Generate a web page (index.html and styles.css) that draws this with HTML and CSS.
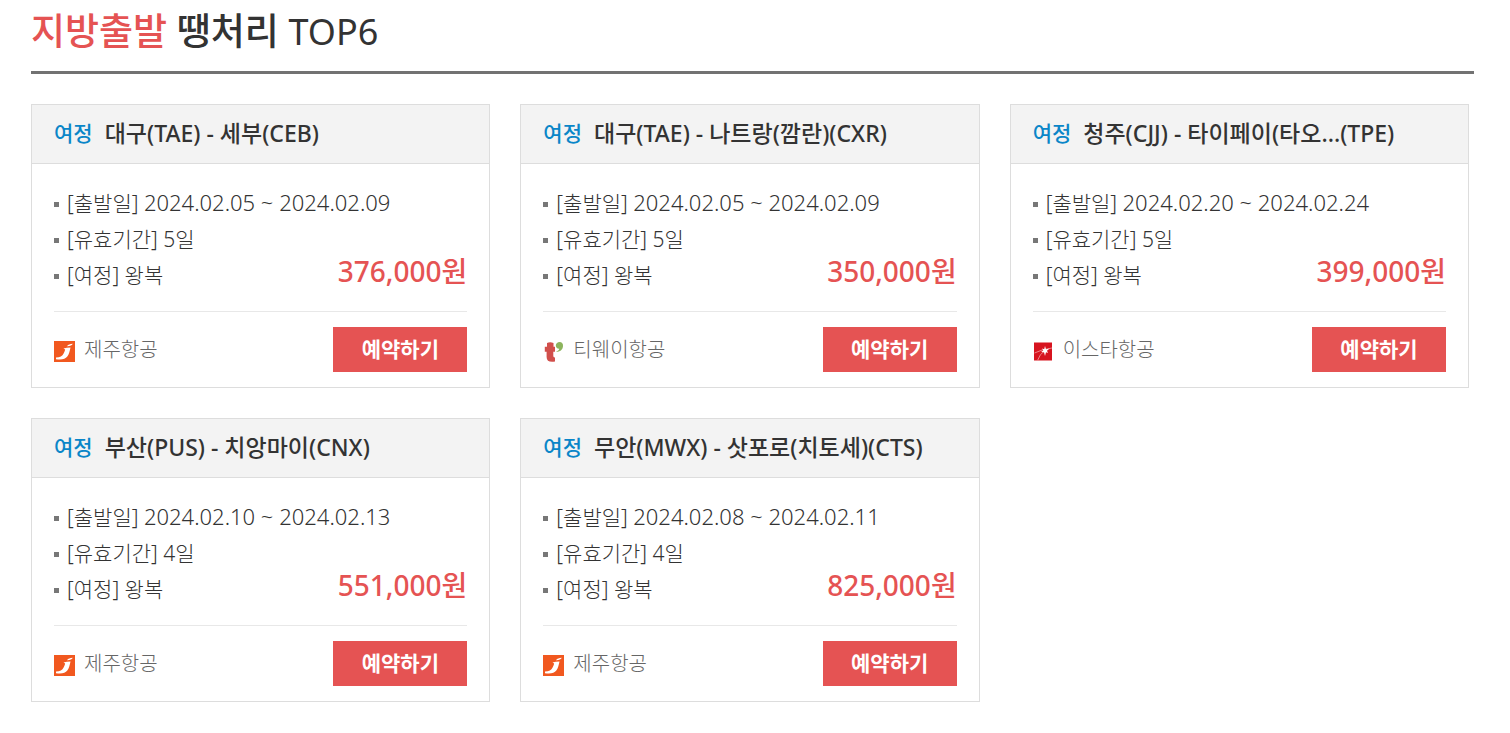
FILE: index.html
```html
<!DOCTYPE html>
<html lang="ko">
<head>
<meta charset="utf-8">
<meta name="viewport" content="width=device-width, initial-scale=1">
<title>지방출발 땡처리 TOP6</title>
<link rel="stylesheet" href="styles.css">
</head>
<body>
<svg class="sprite" aria-hidden="true">
  <symbol id="jeju" viewBox="0 0 21 21">
    <rect width="21" height="21" fill="#f1581f"/>
    <path d="M9.500 7.500Q12.500 6.500 16.500 6.400C15.800 10 15 13 13.300 15.500C11.300 18.300 7.500 18.900 2 18.200V16.600C6 16.400 8.400 15 9.600 12.500C10.500 10.700 11 9.600 11.100 8.500Z" fill="#fff"/>
    <path d="M13 5.200C14.200 3.600 16 2.900 18.800 2.800 18 4.600 16 5.300 13 5.200Z" fill="#fff"/>
  </symbol>
  <symbol id="tway" viewBox="0 0 21 21">
    <path d="M4 2Q7 .5 10.500 2V5.700H12V10.700H10.300V15Q10.300 16.600 12 16.400V20.600Q3.600 22 3.600 16V10.700H1.800V5.700H4Z" fill="#d14f4b"/>
    <path d="M16.500 1C19 1 20.300 2.800 20 5.200 19.600 8.800 17 11 13 10.900 15.200 9.800 16.300 8.700 16.200 7.800 14 7.600 12.700 6.200 12.800 4.300 12.900 2.300 14.700 1 16.500 1Z" fill="#8cb45d"/>
  </symbol>
  <symbol id="eastar" viewBox="0 0 21 21">
    <rect x="1" y="1.500" width="18" height="18" fill="#d7141f"/>
    <path d="M1.500 12Q8 8.500 19 7M4.500 19.500Q6.500 13 12 9.500" fill="none" stroke="#ee9094" stroke-width=".9"/>
    <path d="M12 5 13 8.200 16.500 7.500 14 9.800 15 12 13 11.200 12 15 11 11.300 8 11 10.300 9.400 9 7.500 11.200 8.200Z" fill="#fff"/>
  </symbol>
</svg>
<main class="deals">
  <h1 class="title"><em class="accent">지방출발</em> 땡처리 <span class="rank">TOP6</span></h1>
  <div class="grid">
    <article class="card">
      <h2 class="route"><span class="tag">여정</span>대구(TAE) - 세부(CEB)</h2>
      <div class="info">
        <ul class="facts"><li>[출발일] <span class="dates">2024.02.05 ~ 2024.02.09</span></li><li>[유효기간] 5일</li><li>[여정] 왕복</li></ul>
        <strong class="price">376,000원</strong>
      </div>
      <div class="foot"><span class="airline"><svg class="logo" aria-hidden="true"><use href="#jeju"/></svg>제주항공</span><button class="book" type="button">예약하기</button></div>
    </article>
    <article class="card">
      <h2 class="route"><span class="tag">여정</span>대구(TAE) - 나트랑(깜란)(CXR)</h2>
      <div class="info">
        <ul class="facts"><li>[출발일] <span class="dates">2024.02.05 ~ 2024.02.09</span></li><li>[유효기간] 5일</li><li>[여정] 왕복</li></ul>
        <strong class="price">350,000원</strong>
      </div>
      <div class="foot"><span class="airline"><svg class="logo" aria-hidden="true"><use href="#tway"/></svg>티웨이항공</span><button class="book" type="button">예약하기</button></div>
    </article>
    <article class="card">
      <h2 class="route"><span class="tag">여정</span>청주(CJJ) - 타이페이(타오...(TPE)</h2>
      <div class="info">
        <ul class="facts"><li>[출발일] <span class="dates">2024.02.20 ~ 2024.02.24</span></li><li>[유효기간] 5일</li><li>[여정] 왕복</li></ul>
        <strong class="price">399,000원</strong>
      </div>
      <div class="foot"><span class="airline"><svg class="logo" aria-hidden="true"><use href="#eastar"/></svg>이스타항공</span><button class="book" type="button">예약하기</button></div>
    </article>
    <article class="card">
      <h2 class="route"><span class="tag">여정</span>부산(PUS) - 치앙마이(CNX)</h2>
      <div class="info">
        <ul class="facts"><li>[출발일] <span class="dates">2024.02.10 ~ 2024.02.13</span></li><li>[유효기간] 4일</li><li>[여정] 왕복</li></ul>
        <strong class="price">551,000원</strong>
      </div>
      <div class="foot"><span class="airline"><svg class="logo" aria-hidden="true"><use href="#jeju"/></svg>제주항공</span><button class="book" type="button">예약하기</button></div>
    </article>
    <article class="card">
      <h2 class="route"><span class="tag">여정</span>무안(MWX) - 삿포로(치토세)(CTS)</h2>
      <div class="info">
        <ul class="facts"><li>[출발일] <span class="dates">2024.02.08 ~ 2024.02.11</span></li><li>[유효기간] 4일</li><li>[여정] 왕복</li></ul>
        <strong class="price">825,000원</strong>
      </div>
      <div class="foot"><span class="airline"><svg class="logo" aria-hidden="true"><use href="#jeju"/></svg>제주항공</span><button class="book" type="button">예약하기</button></div>
    </article>
  </div>
</main>
</body>
</html>
```
FILE: styles.css
```css
* { box-sizing: border-box; }
body {
  margin: 0;
  background: #fff;
  color: #333;
  font-family: "Noto Sans", "Noto Sans CJK KR", sans-serif;
}
.sprite { display: none; }
.deals { padding: 0 36px 30px 31px; }
.title {
  margin: 0 0 30px;
  padding: 5px 0 14px;
  border-bottom: 3px solid #727272;
  font-size: 37px;
  line-height: 52px;
  font-weight: 500;
}
.accent { font-style: normal; color: #e55353; }
.rank { font-size: 36px; line-height: 1; font-weight: 400; }
.grid {
  display: grid;
  grid-template-columns: repeat(3, minmax(0, 1fr));
  gap: 30px;
  margin-right: 5px;
}
.card { border: 1px solid #ddd; }
.route {
  display: flex;
  align-items: center;
  gap: 12px;
  margin: 0;
  padding: 10px 22px 12px;
  border-bottom: 1px solid #ddd;
  background: #f3f3f3;
  font-size: 23px;
  line-height: 36px;
  font-weight: 500;
  white-space: nowrap;
}
.tag { color: #0a86c8; font-size: 21px; }
.info {
  display: flex;
  justify-content: space-between;
  align-items: flex-end;
  margin: 0 22px;
  padding: 21px 0 18px;
  border-bottom: 1px solid #e8e8e8;
}
.facts {
  margin: 0;
  padding: 0;
  list-style: none;
  font-size: 21px;
  line-height: 36px;
  font-weight: 300;
  white-space: nowrap;
}
.facts li::before {
  content: "";
  display: inline-block;
  width: 5px;
  height: 5px;
  margin-right: 8px;
  background: #777;
  vertical-align: 4px;
}
.dates { font-size: 22px; line-height: 1; }
.price {
  margin-left: -120px;
  padding-bottom: 4px;
  color: #e55353;
  font-size: 28px;
  line-height: 36px;
  font-weight: 500;
}
.foot {
  display: flex;
  justify-content: space-between;
  align-items: center;
  padding: 15px 22px;
}
.airline {
  display: flex;
  align-items: center;
  gap: 9px;
  color: #666;
  font-size: 20px;
  line-height: 30px;
  font-weight: 300;
}
.logo { width: 21px; height: 21px; margin-top: 3px; }
.book {
  width: 134px;
  height: 45px;
  padding: 0 0 4px;
  border: 0;
  background: #e55353;
  color: #fff;
  font: inherit;
  font-size: 21px;
  font-weight: 700;
}
```
